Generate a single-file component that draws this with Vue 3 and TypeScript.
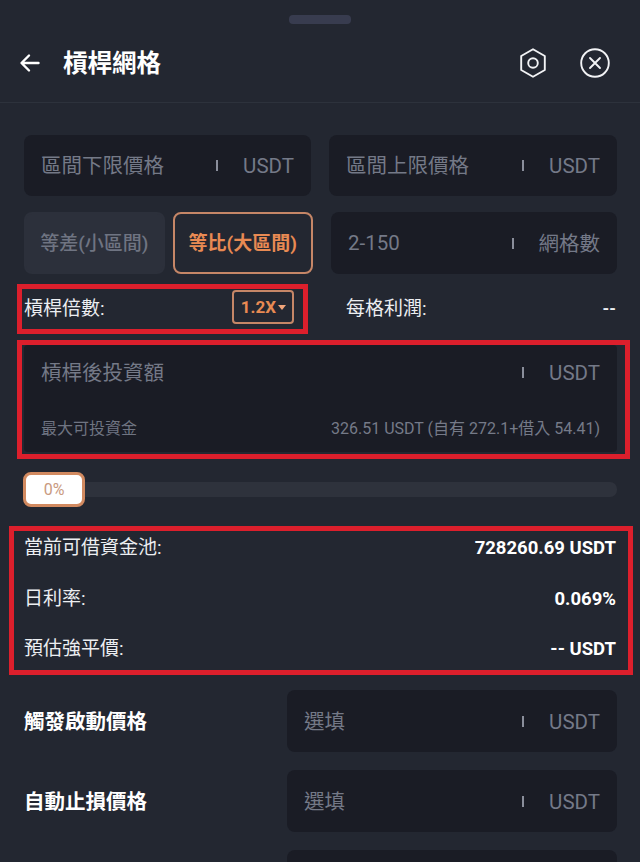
<template>
  <div class="sheet">
    <div class="handle-wrap"><span class="handle"></span></div>
    <header class="header">
      <svg class="back" width="22" height="20" viewBox="0 0 22 20" fill="none" stroke="#fff" stroke-width="2.4" stroke-linecap="round" stroke-linejoin="round">
        <path d="M19.5 10H3M10 2.5 2.5 10l7.5 7.5" />
      </svg>
      <h1 class="title">槓桿網格</h1>
      <svg class="hex" width="26" height="30" viewBox="0 0 26 30" fill="none" stroke="#f2f3f5" stroke-width="1.9">
        <path d="M13 1.2 24.8 8v14L13 28.8 1.2 22V8z" stroke-linejoin="round" />
        <circle cx="13" cy="15" r="4.8" />
      </svg>
      <svg class="close" width="30" height="30" viewBox="0 0 30 30" fill="none" stroke="#f2f3f5" stroke-width="1.9" stroke-linecap="round">
        <circle cx="15" cy="15" r="13.8" />
        <path d="m10 10 10 10M20 10 10 20" />
      </svg>
    </header>

    <main class="body">
      <div class="row">
        <div v-for="p in rangeFields" :key="p" class="field">
          <span class="ph">{{ p }}</span>
          <i class="bar"></i>
          <span class="unit">USDT</span>
        </div>
      </div>

      <div class="row mode-row">
        <div class="modes">
          <button type="button" class="mode">等差(小區間)</button>
          <button type="button" class="mode on">等比(大區間)</button>
        </div>
        <div class="field grid-field">
          <span class="ph">2-150</span>
          <i class="bar"></i>
          <span class="unit">網格數</span>
        </div>
      </div>

      <div class="row lev-row">
        <div class="lev">
          <span class="cjk-label">槓桿倍數:</span>
          <span class="lev-btn">1.2X<b class="caret"></b></span>
        </div>
        <div class="profit">
          <span class="cjk-label">每格利潤:</span>
          <span class="dash">--</span>
        </div>
        <span class="mark mark-lev"></span>
      </div>

      <div class="invest">
        <div class="invest-top">
          <span class="ph">槓桿後投資額</span>
          <i class="bar"></i>
          <span class="unit">USDT</span>
        </div>
        <div class="invest-sub">
          <span>最大可投資金</span>
          <span class="max-val">326.51 USDT (自有 272.1+借入 54.41)</span>
        </div>
        <span class="mark mark-invest"></span>
      </div>

      <div class="slider">
        <div class="thumb">0%</div>
        <div class="track"></div>
      </div>

      <div class="stats">
        <div v-for="s in stats" :key="s.label" class="stat">
          <span class="cjk-label">{{ s.label }}</span>
          <strong>{{ s.value }}</strong>
        </div>
        <span class="mark mark-stats"></span>
      </div>

      <div v-for="t in triggers" :key="t" class="trigger">
        <span class="trigger-label">{{ t }}</span>
        <div class="field trigger-field">
          <span class="ph">選填</span>
          <i class="bar"></i>
          <span class="unit">USDT</span>
        </div>
      </div>
      <div class="trigger">
        <span class="trigger-label"></span>
        <div class="field trigger-field"></div>
      </div>
    </main>
  </div>
</template>

<script setup lang="ts">
const rangeFields = ['區間下限價格', '區間上限價格']

const stats = [
  { label: '當前可借資金池:', value: '728260.69 USDT' },
  { label: '日利率:', value: '0.069%' },
  { label: '預估強平價:', value: '-- USDT' },
]

const triggers = ['觸發啟動價格', '自動止損價格']
</script>

<style>
html,
body {
  margin: 0;
  background: #232731;
}
</style>

<style scoped>
.sheet {
  height: 862px;
  overflow: hidden;
  background: #232731;
  color: #eceef1;
  font-family: Roboto, "Noto Sans CJK TC", sans-serif;
}
.handle-wrap {
  display: flex;
  justify-content: center;
  height: 9px;
  padding-top: 15px;
}
.handle {
  width: 62px;
  height: 9px;
  border-radius: 4px;
  background: #383c4f;
}
.header {
  display: flex;
  align-items: center;
  height: 78px;
  padding: 0 30px 0 19px;
  border-bottom: 1px solid #2d323c;
}
.back {
  flex-shrink: 0;
}
.title {
  flex: 1;
  margin: 2px 0 0 22px;
  font-size: 24.5px;
  font-weight: 700;
  color: #fff;
  line-height: 1;
}
.hex {
  margin-right: 34px;
}
.body {
  display: flex;
  flex-direction: column;
  padding: 32px 23px 0 24px;
}
.row {
  display: flex;
  gap: 18px;
}
.field {
  flex: 1;
  min-width: 0;
  display: flex;
  align-items: center;
  height: 61px;
  padding: 0 17px;
  border-radius: 8px;
  background: #1a1c25;
  box-sizing: border-box;
}
.row > .field:first-child,
.lev {
  flex: 0 0 287px;
}
.ph {
  flex: 1;
  margin-bottom: 3px;
  font-size: 20.5px;
  color: #747987;
  white-space: nowrap;
}
.grid-field .ph {
  margin-bottom: 0;
}
.bar {
  width: 2px;
  height: 11px;
  margin-right: 25px;
  background: #8a8e9b;
}
.unit {
  margin-top: 1px;
  font-size: 20.5px;
  color: #747988;
  white-space: nowrap;
}
.grid-field .unit {
  margin: 0 0 2px;
}
.cjk-label {
  margin-bottom: 3px;
}
.mode-row {
  margin-top: 16px;
}
.modes {
  flex: 0 0 289px;
  display: flex;
  gap: 8px;
}
.mode {
  flex: 1;
  min-width: 0;
  height: 62px;
  padding: 0 0 3px;
  font-family: inherit;
  font-size: 19px;
  font-weight: 500;
  color: #6f7482;
  background: #2c303b;
  border: 2px solid #2c303b;
  border-radius: 8px;
  white-space: nowrap;
}
.mode.on {
  font-weight: 700;
  color: #e88a53;
  background: #232731;
  border-color: #c58667;
}
.grid-field {
  height: 62px;
}
.lev-row {
  position: relative;
  height: 44px;
  margin-top: 12px;
  align-items: center;
  font-size: 19px;
  color: #eceef1;
}
.lev {
  display: flex;
  align-items: center;
  justify-content: space-between;
  padding-right: 17px;
  box-sizing: border-box;
}
.lev-btn {
  display: flex;
  align-items: center;
  gap: 2px;
  height: 34px;
  margin-bottom: 2px;
  padding: 0 6px 0 7px;
  font-size: 17px;
  font-weight: 700;
  color: #e88a53;
  border: 2px solid #c58667;
  border-radius: 4px;
  box-sizing: border-box;
}
.caret {
  width: 0;
  height: 0;
  border-left: 4px solid transparent;
  border-right: 4px solid transparent;
  border-top: 5px solid #f0a47a;
}
.profit {
  flex: 1;
  display: flex;
  align-items: center;
  justify-content: space-between;
  padding: 0 1px 0 17px;
  box-sizing: border-box;
}
.dash {
  font-weight: 700;
  font-size: 17px;
}
.invest {
  position: relative;
  height: 107px;
  margin-top: 15px;
  padding: 0 17px;
  background: #1a1c25;
  border-radius: 4px;
  box-sizing: border-box;
}
.invest-top {
  display: flex;
  align-items: center;
  height: 54px;
}
.invest-sub {
  display: flex;
  justify-content: space-between;
  margin-top: 18px;
  font-size: 16px;
  line-height: 23px;
  color: #6f7482;
}
.max-val {
  color: #757a88;
}
.slider {
  position: relative;
  display: flex;
  align-items: center;
  height: 35px;
  margin-top: 20px;
}
.thumb {
  flex-shrink: 0;
  width: 62px;
  height: 35px;
  margin-left: -1px;
  font-size: 16px;
  line-height: 29px;
  text-align: center;
  color: #c99a80;
  background: #fff;
  border: 3px solid #d28a60;
  border-radius: 8px;
  box-sizing: border-box;
}
.track {
  flex: 1;
  height: 15px;
  background: #2e323c;
  border-radius: 0 7px 7px 0;
}
.stats {
  position: relative;
  display: flex;
  flex-direction: column;
  margin-top: 15px;
  padding-right: 1px;
  font-size: 19px;
}
.stat {
  display: flex;
  align-items: center;
  justify-content: space-between;
  height: 50.5px;
}
.stat strong {
  margin-top: 2px;
  font-size: 18.5px;
  font-weight: 700;
  color: #fff;
}
.trigger {
  display: flex;
  align-items: center;
  margin-bottom: 18px;
}
.stats + .trigger {
  margin-top: 16.5px;
}
.trigger-label {
  width: 263px;
  flex-shrink: 0;
  margin-bottom: 3px;
  font-size: 20.5px;
  font-weight: 700;
  color: #fff;
}
.trigger-field {
  height: 62px;
}
.mark {
  position: absolute;
  border: 5px solid #dc1f2c;
  box-sizing: border-box;
  pointer-events: none;
}
.mark-lev {
  left: -7px;
  top: -2px;
  width: 291px;
  height: 50px;
}
.mark-invest {
  left: -7px;
  top: -5px;
  width: 613px;
  height: 119px;
}
.mark-stats {
  left: -15px;
  top: 4px;
  width: 624px;
  height: 149px;
}
</style>
